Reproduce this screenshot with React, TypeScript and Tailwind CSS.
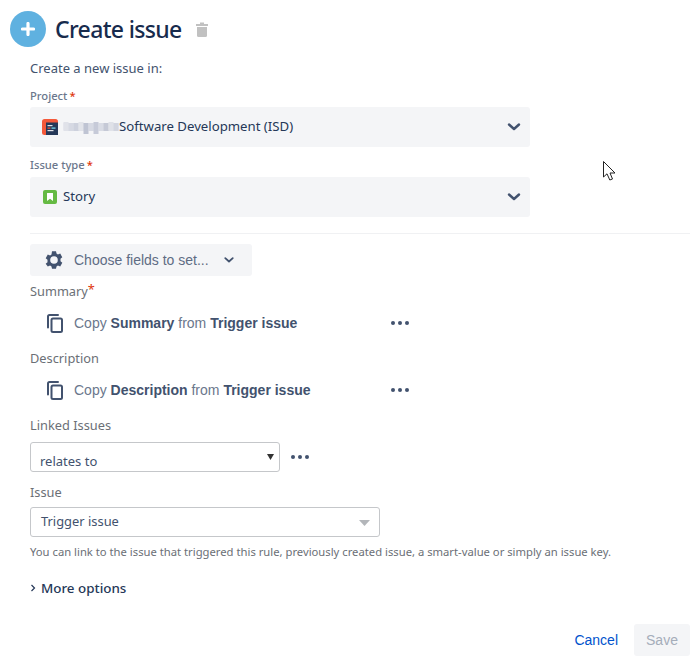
import React from "react";

const Chevron = ({ size = 16, cls = "" }: { size?: number; cls?: string }) => (
  <svg width={size} height={size} viewBox="0 0 16 16" className={cls} fill="none">
    <path d="M3 5.5 L8 10 L13 5.5" stroke="#42526e" strokeWidth="2.4" strokeLinecap="round" strokeLinejoin="round" />
  </svg>
);

const Dots = () => (
  <svg width="20" height="6" viewBox="0 0 20 6" fill="#42526e">
    <circle cx="3" cy="3" r="2" />
    <circle cx="10" cy="3" r="2" />
    <circle cx="17" cy="3" r="2" />
  </svg>
);

const CopyIcon = () => (
  <svg width="16" height="19" viewBox="0 0 16 19" fill="none" stroke="#42526e" strokeWidth="2">
    <path d="M1 13.5 V2.5 Q1 1 2.5 1 H11" strokeLinecap="round" />
    <rect x="4.5" y="4.5" width="10.5" height="13.5" rx="1.5" />
  </svg>
);

const Gear = () => (
  <svg width="18" height="18" viewBox="0 0 18 18">
    <path
      fill="#42526e"
      fillRule="evenodd"
      d="M7 .2h4l.5 2.4 1.4.8 2.3-.8 2.1 3.6-1.8 1.6v2.4l1.8 1.6-2.1 3.6-2.3-.8-1.4.8-.5 2.4H7l-.5-2.4-1.4-.8-2.3.8L.7 12.8l1.8-1.6V8.8L.7 7.2l2.1-3.6 2.3.8 1.4-.8L7 .2zM9 5.2a3.8 3.8 0 1 0 0 7.6 3.8 3.8 0 0 0 0-7.6z"
    />
  </svg>
);

const ProjectIcon = () => (
  <svg width="16" height="16" viewBox="0 0 16 16">
    <rect width="16" height="16" rx="2.5" fill="#f4593a" />
    <rect x="4" y="3.5" width="12" height="12.5" fill="#253858" />
    <rect x="5.5" y="6" width="5" height="1.2" fill="#dfe1e6" />
    <rect x="5.5" y="8.5" width="3" height="1.2" fill="#f4593a" />
    <rect x="9.5" y="8.5" width="4" height="1.2" fill="#79e2f2" />
    <rect x="5.5" y="11" width="6" height="1.2" fill="#dfe1e6" />
  </svg>
);

const StoryIcon = () => (
  <svg width="14" height="14" viewBox="0 0 14 14">
    <rect width="14" height="14" rx="2" fill="#65ba43" />
    <path d="M4 3.2 Q4 3 4.3 3 H9.7 Q10 3 10 3.2 V11 L7 8.8 L4 11 Z" fill="#fff" />
  </svg>
);

const Mosaic = () => {
  const cols = ["#e0e2e9", "#d6d9e3", "#cdd1dd", "#e2e4ea", "#bfc4d3", "#d6d9e3", "#c6cad8", "#d9dce5", "#c5c9d6", "#dfe1e8", "#d2d5e0"];
  return (
    <svg width="56" height="14" viewBox="0 0 55 14">
      <rect x="0" y="3" width="55" height="8" fill="#e0e2e9" />
      {cols.map((c, i) => (
        <rect key={i} x={i * 5} y={i % 3 === 0 ? 2 : 3} width="5" height={i === 4 || i === 6 ? 12 : 8} fill={c} />
      ))}
    </svg>
  );
};

const Req = () => <span className="text-[#de350b] ml-0.5">*</span>;

const FieldLabel = ({ children, cls = "" }: { children: React.ReactNode; cls?: string }) => (
  <div className={`text-[11.2px] leading-4 font-medium text-[#6b778c] ${cls}`}>{children}</div>
);

const GreyLabel = ({ children, cls = "" }: { children: React.ReactNode; cls?: string }) => (
  <div className={`text-[12.8px] leading-5 text-[#6b6f76] ${cls}`}>{children}</div>
);

const BigSelect = ({ children, cls = "" }: { children: React.ReactNode; cls?: string }) => (
  <div className={`w-[500px] h-10 rounded-[3px] bg-[#f4f5f7] flex items-center justify-between pl-3 pr-2 text-[13.2px] text-[#253858] ${cls}`}>
    <div className="flex items-center">{children}</div>
    <Chevron />
  </div>
);

const CopyRow = ({ field, cls = "" }: { field: string; cls?: string }) => (
  <div className={`flex items-center h-5 w-[380px] ${cls}`} style={{ fontFamily: '"Liberation Sans", Arial, sans-serif' }}>
    <div className="ml-[17px] w-[27px] shrink-0">
      <CopyIcon />
    </div>
    <div className="text-[14px] text-[#6b778c] whitespace-nowrap flex-1">
      Copy <b className="text-[#42526e]">{field}</b> from <b className="text-[#42526e]">Trigger issue</b>
    </div>
    <Dots />
  </div>
);

export default function App() {
  return (
    <div
      className="relative w-[696px] h-[666px] bg-white overflow-hidden"
      style={{ fontFamily: '"Noto Sans", "Open Sans", sans-serif' }}
    >
      <div className="flex items-center pl-[10px] pt-[11px]">
        <div className="w-9 h-9 rounded-full bg-[#5fb1e0] flex items-center justify-center">
          <svg width="14" height="14" viewBox="0 0 14 14">
            <path d="M7 1.5 V12.5 M1.5 7 H12.5" stroke="#fff" strokeWidth="3.2" strokeLinecap="round" />
          </svg>
        </div>
        <div className="ml-[9px] text-[23px] tracking-[-0.65px] leading-9 text-[#172b4d] font-medium whitespace-nowrap">Create issue</div>
        <svg className="ml-[14px]" width="12" height="15" viewBox="0 0 12 15" fill="#c1c1c1">
          <path d="M4 0.5 H8 V2 H12 V4 H0 V2 H4 Z" />
          <path d="M1 5 H11 V13.5 Q11 15 9.5 15 H2.5 Q1 15 1 13.5 Z" />
        </svg>
      </div>

      <div className="pl-[30px]">
        <div className="mt-[11px] text-[13px] leading-5 text-[#42526e]">Create a new issue in:</div>
        <FieldLabel cls="mt-[10px]">
          Project
          <Req />
        </FieldLabel>
        <BigSelect cls="mt-[3px]">
          <ProjectIcon />
          <span className="ml-[5px] mr-0"><Mosaic /></span>
          <span className="whitespace-nowrap">Software Development (ISD)</span>
        </BigSelect>
        <FieldLabel cls="mt-[10px]">
          Issue type
          <Req />
        </FieldLabel>
        <BigSelect cls="mt-[4px]">
          <span className="ml-px"><StoryIcon /></span>
          <span className="ml-[6px]">Story</span>
        </BigSelect>

        <div className="mt-4 h-px w-[660px] bg-[#f0f1f3]" />

        <div
          className="mt-[10px] w-[222px] h-8 rounded-[3px] bg-[#f4f5f7] flex items-center pl-[15px] text-[14px] text-[#5e6c84]"
          style={{ fontFamily: '"Liberation Sans", Arial, sans-serif' }}
        >
          <Gear />
          <span className="ml-[11px] whitespace-nowrap">Choose fields to set...</span>
          <Chevron size={12} cls="ml-[14px]" />
        </div>

        <GreyLabel cls="mt-[5px]">
          Summary<span className="text-[#de350b] relative -top-[2px]">*</span>
        </GreyLabel>
        <CopyRow field="Summary" cls="mt-[12px]" />
        <GreyLabel cls="mt-[15px]">Description</GreyLabel>
        <CopyRow field="Description" cls="mt-[12px]" />
        <GreyLabel cls="mt-[15px]">Linked Issues</GreyLabel>

        <div className="mt-[7px] flex items-center">
          <div className="relative w-[250px] h-[30px] rounded-[3px] border border-[#c5c7ca] bg-white pl-[9px] pt-[8px] text-[13px] leading-5 text-[#42526e]">
            relates to
            <svg className="absolute right-[5px] top-[11px]" width="7" height="6" viewBox="0 0 7 6" fill="#333">
              <path d="M0 0 H7 L3.5 6 Z" />
            </svg>
          </div>
          <div className="ml-[10px] flex">
            <Dots />
          </div>
        </div>

        <GreyLabel cls="mt-[10px]">Issue</GreyLabel>
        <div className="mt-[5px] relative w-[350px] h-[30px] rounded-[3px] border border-[#c5c7ca] bg-white pl-[10px] flex items-center text-[12.9px] text-[#42526e]">
          Trigger issue
          <svg className="absolute right-[9px] top-[12px]" width="11" height="6" viewBox="0 0 11 6" fill="#b3b6ba">
            <path d="M0 0 H11 L5.5 6 Z" />
          </svg>
        </div>
        <div className="mt-[7px] text-[11.25px] leading-4 text-[#6b6f76] whitespace-nowrap">
          You can link to the issue that triggered this rule, previously created issue, a smart-value or simply an issue key.
        </div>
        <div className="mt-[18px] flex items-center text-[13.4px] leading-5 font-medium text-[#253858]">
          <svg width="6" height="8" viewBox="0 0 6 8" fill="none">
            <path d="M1.5 1 L4.5 4 L1.5 7" stroke="#253858" strokeWidth="1.2" />
          </svg>
          <span className="ml-[5px]">More options</span>
        </div>
      </div>

      <div
        className="mt-[26px] pr-[6px] flex items-center justify-end text-[14px]"
        style={{ fontFamily: '"Liberation Sans", Arial, sans-serif' }}
      >
        <span className="text-[#0052cc]">Cancel</span>
        <div className="ml-[16px] w-[56px] h-8 rounded-[3px] bg-[#f4f5f7] flex items-center justify-center text-[#a5adba]">Save</div>
      </div>

      <svg className="absolute left-[603px] top-[161px]" width="13" height="20" viewBox="0 0 13 20">
        <path d="M0.5 0.5 V16 L4 12.8 L6.8 19 L9.5 18 L7 12 H12 Z" fill="#fff" stroke="#222" strokeWidth="1" strokeLinejoin="round" />
      </svg>
    </div>
  );
}
